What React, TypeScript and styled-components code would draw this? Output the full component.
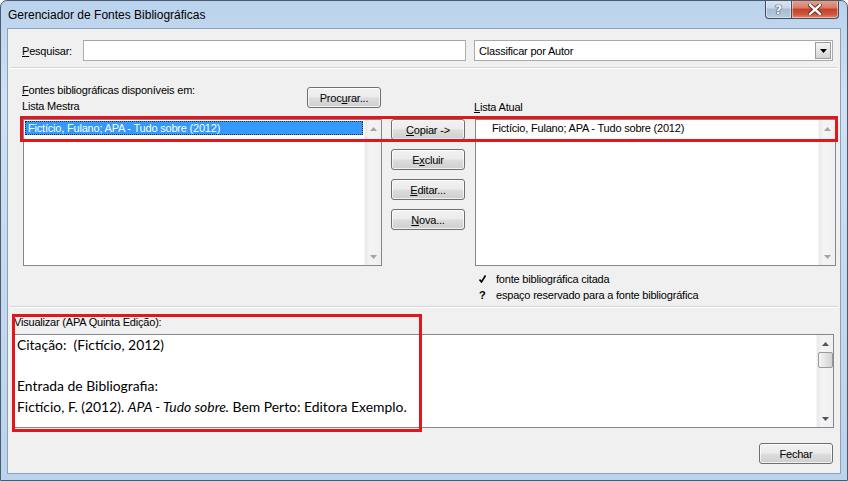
import React from "react";
import styled, { createGlobalStyle } from "styled-components";

const GlobalStyle = createGlobalStyle`
    html, body {
        margin: 0;
        padding: 0;
        background: #ffffff;
    }
    body {
        font-family: "Liberation Sans", Arial, sans-serif;
        font-size: 11px;
        letter-spacing: -0.2px;
        color: #000;
    }
    * {
        box-sizing: border-box;
    }
`;

// Window frame
const Window = styled.div`
    position: relative;
    width: 848px;
    height: 481px;
    display: flex;
    flex-direction: column;
    padding: 0 6px 6px;
    border: 1px solid #4b5c70;
    border-radius: 7px 7px 0 0;
    background: linear-gradient(180deg, #bad2ec 0%, #d0e1f3 20%, #c4d9ef 60%, #bcd3ec 100%);
    overflow: hidden;
`;

const TitleBar = styled.div`
    height: 27px;
    display: flex;
    justify-content: space-between;
    align-items: flex-start;
`;

const TitleText = styled.div`
    margin: 6px 0 0 1px;
    font-size: 12px;
    line-height: 16px;
    letter-spacing: 0;
    color: #000;
`;

const TitleButtons = styled.div`
    display: flex;
    margin: -1px 2px 0 0;
`;

const CaptionButton = styled.div<{ $close?: boolean }>`
    width: ${(p) => (p.$close ? "47px" : "27px")};
    height: 19px;
    display: flex;
    align-items: center;
    justify-content: center;
    border: 1px solid #3f4f62;
    border-top: none;
    border-left: ${(p) => (p.$close ? "none" : "1px solid #3f4f62")};
    border-radius: ${(p) => (p.$close ? "0 0 4px 0" : "0 0 0 4px")};
    background: ${(p) =>
        p.$close
            ? "linear-gradient(180deg, #e8a493 0%, #d47a67 45%, #c2402c 50%, #d2553d 80%, #e38a6e 100%)"
            : "linear-gradient(180deg, #dbe6f2 0%, #c7d6e6 45%, #aabbd0 50%, #b8cade 100%)"};
    box-shadow: inset 0 0 0 1px rgba(255, 255, 255, 0.45);
`;

const HelpGlyph = styled.span`
    font-family: "DejaVu Sans", sans-serif;
    font-size: 13px;
    font-weight: bold;
    color: #f4f7fb;
    letter-spacing: 0;
    text-shadow: 0 0 1px #33475e, 0 0 1px #33475e, 0 0 1px #33475e;
    line-height: 1;
`;

const Client = styled.div`
    position: relative;
    flex: 1;
    display: flex;
    flex-direction: column;
    border: 1px solid #8ba1ba;
    background: #f0f0f0;
`;

// Search row
const SearchRow = styled.div`
    display: flex;
    align-items: center;
    height: 21px;
    margin: 11px 0 0 14px;
`;

const FieldLabel = styled.span`
    width: 61px;
`;

const Accel = styled.span`
    text-decoration: underline;
    text-underline-offset: 1px;
`;

const TextBox = styled.div`
    width: 383px;
    height: 21px;
    background: #fff;
    border: 1px solid #abadb3;
    border-top-color: #a0a4ab;
`;

const SortSelect = styled.div`
    margin-left: 8px;
    width: 359px;
    height: 21px;
    display: flex;
    align-items: center;
    justify-content: space-between;
    padding-left: 4px;
    background: #fff;
    border: 1px solid #a9a9a9;
`;

const DropButton = styled.div`
    width: 16px;
    height: 17px;
    margin-right: 1px;
    display: flex;
    align-items: center;
    justify-content: center;
    border: 1px solid #9c9c9c;
    background: linear-gradient(180deg, #f4f4f4 0%, #e6e6e6 50%, #d4d4d4 100%);
`;

const Separator = styled.div<{ $top: number }>`
    margin: ${(p) => p.$top}px 2px 0;
    height: 2px;
    border-top: 1px solid #d5d5d5;
    border-bottom: 1px solid #ffffff;
`;

// Source lists
const ListsGrid = styled.div`
    display: grid;
    grid-template-columns: 359px 75px 361px;
    grid-template-rows: 37px 147px auto;
    column-gap: 9px;
    margin: 13px 0 0 15px;
`;

const LeftHeader = styled.div`
    display: flex;
    justify-content: space-between;
    align-items: flex-start;
    margin-left: -1px;
`;

const LabelStack = styled.div`
    display: flex;
    flex-direction: column;
    line-height: 16px;
`;

const RightHeader = styled.div`
    display: flex;
    align-items: flex-end;
    line-height: 16px;
    padding-bottom: 4px;
    margin-left: -1px;
`;

const Button = styled.div<{ $top?: number }>`
    width: 74px;
    height: 21px;
    margin-top: ${(p) => p.$top ?? 0}px;
    display: flex;
    align-items: center;
    justify-content: center;
    border: 1px solid #707070;
    border-radius: 3px;
    background: linear-gradient(180deg, #f2f2f2 0%, #ebebeb 48%, #dddddd 52%, #cfcfcf 100%);
    box-shadow: inset 0 0 0 1px rgba(255, 255, 255, 0.7);
    color: #000;
`;

const ProcurarButton = styled(Button)`
    margin-right: 1px;
`;

const ButtonColumn = styled.div`
    display: flex;
    flex-direction: column;
    gap: 9px;
`;

const ListBox = styled.div`
    height: 147px;
    display: flex;
    background: #fff;
    border: 1px solid #828790;
`;

const ListItems = styled.div`
    flex: 1;
    padding: 1px 1px 0 1px;
`;

const ListItem = styled.div<{ $selected?: boolean; $indent?: number }>`
    height: 14px;
    line-height: 12px;
    padding-left: ${(p) => p.$indent ?? 2}px;
    border: 1px ${(p) => (p.$selected ? "dotted #2a2a2a" : "solid transparent")};
    background: ${(p) => (p.$selected ? "#3399ff" : "transparent")};
    color: ${(p) => (p.$selected ? "#fff" : "#000")};
    white-space: nowrap;
`;

const ScrollTrack = styled.div<{ $width?: number }>`
    width: ${(p) => p.$width ?? 17}px;
    display: flex;
    flex-direction: column;
    justify-content: space-between;
    align-items: center;
    background: linear-gradient(90deg, #e9e9e9 0%, #f4f4f4 30%, #f0f0f0 100%);
    border-left: 1px solid #f6f6f6;
`;

const ArrowCell = styled.div`
    height: 17px;
    display: flex;
    align-items: center;
    justify-content: center;
`;

const Thumb = styled.div`
    width: 15px;
    height: 16px;
    border: 1px solid #9a9a9a;
    border-radius: 2px;
    background: linear-gradient(90deg, #f3f3f3 0%, #e4e4e4 50%, #d3d3d3 100%);
`;

const Spacer = styled.div`
    flex: 1;
`;

const Legend = styled.div`
    margin: 5px 0 0 0;
    display: flex;
    flex-direction: column;
    line-height: 16px;
`;

const LegendRow = styled.div`
    display: flex;
    align-items: center;
`;

const LegendIcon = styled.span`
    width: 21px;
    padding-left: 4px;
    display: flex;
    justify-content: flex-start;
    font-weight: bold;
    letter-spacing: 0;
`;

// Preview
const PreviewLabel = styled.div`
    margin: 6px 0 0 6px;
    line-height: 16px;
`;

const PreviewBox = styled.div`
    margin: 4px 0 0 5px;
    width: 821px;
    height: 94px;
    display: flex;
    background: #fff;
    border: 1px solid #828790;
`;

const PreviewText = styled.div`
    flex: 1;
    padding: 0 3px;
    font-family: Lato, "Noto Sans", sans-serif;
    font-size: 13.9px;
    line-height: 20.6px;
    letter-spacing: 0;
    white-space: pre;
    overflow: hidden;
`;

const Footer = styled.div`
    display: flex;
    justify-content: flex-end;
    margin: 15px 7px 0 0;
`;

const Annotation = styled.div<{ $left: number; $top: number; $w: number; $h: number }>`
    position: absolute;
    left: ${(p) => p.$left}px;
    top: ${(p) => p.$top}px;
    width: ${(p) => p.$w}px;
    height: ${(p) => p.$h}px;
    border: 3px solid #e2161b;
    pointer-events: none;
`;

const UpArrow = ({ color = "#a5a5a5" }: { color?: string }) => (
    <svg width="7" height="4" viewBox="0 0 7 4">
        <path d="M0 4 L3.5 0 L7 4 Z" fill={color} />
    </svg>
);

const DownArrow = ({ color = "#a5a5a5" }: { color?: string }) => (
    <svg width="7" height="4" viewBox="0 0 7 4">
        <path d="M0 0 L3.5 4 L7 0 Z" fill={color} />
    </svg>
);

const CloseGlyph = () => (
    <svg width="14" height="11" viewBox="0 0 14 11">
        <path d="M2 1 L12 10 M12 1 L2 10" stroke="#5a1a12" strokeWidth="4" strokeLinecap="square" />
        <path d="M2 1 L12 10 M12 1 L2 10" stroke="#ffffff" strokeWidth="2.4" strokeLinecap="square" />
    </svg>
);

const CheckGlyph = () => (
    <svg width="7" height="8" viewBox="0 0 7 8">
        <path d="M0.5 4.5 L2.5 7 L6.5 0.5" stroke="#000" strokeWidth="1.6" fill="none" />
    </svg>
);

const ScrollBar = () => (
    <ScrollTrack>
        <ArrowCell>
            <UpArrow />
        </ArrowCell>
        <ArrowCell>
            <DownArrow />
        </ArrowCell>
    </ScrollTrack>
);

const App = () => {
    return (
        <>
            <GlobalStyle />
            <Window>
                <TitleBar>
                    <TitleText>Gerenciador de Fontes Bibliográficas</TitleText>
                    <TitleButtons>
                        <CaptionButton>
                            <HelpGlyph>?</HelpGlyph>
                        </CaptionButton>
                        <CaptionButton $close>
                            <CloseGlyph />
                        </CaptionButton>
                    </TitleButtons>
                </TitleBar>
                <Client>
                    <SearchRow>
                        <FieldLabel>
                            <Accel>P</Accel>esquisar:
                        </FieldLabel>
                        <TextBox />
                        <SortSelect>
                            <span>Classificar por Autor</span>
                            <DropButton>
                                <DownArrow color="#000" />
                            </DropButton>
                        </SortSelect>
                    </SearchRow>
                    <Separator $top={6} />

                    <ListsGrid>
                        <LeftHeader>
                            <LabelStack>
                                <span>
                                    <Accel>F</Accel>ontes bibliográficas disponíveis em:
                                </span>
                                <span>Lista Mestra</span>
                            </LabelStack>
                            <ProcurarButton $top={5}>
                                Proc<Accel>u</Accel>rar...
                            </ProcurarButton>
                        </LeftHeader>
                        <div />
                        <RightHeader>
                            <span>
                                <Accel>L</Accel>ista Atual
                            </span>
                        </RightHeader>

                        <ListBox>
                            <ListItems>
                                <ListItem $selected>Fictício, Fulano; APA - Tudo sobre (2012)</ListItem>
                            </ListItems>
                            <ScrollBar />
                        </ListBox>
                        <ButtonColumn>
                            <Button>
                                <Accel>C</Accel>opiar -&gt;
                            </Button>
                            <Button>
                                E<Accel>x</Accel>cluir
                            </Button>
                            <Button>
                                <Accel>E</Accel>ditar...
                            </Button>
                            <Button>
                                <Accel>N</Accel>ova...
                            </Button>
                        </ButtonColumn>
                        <ListBox>
                            <ListItems>
                                <ListItem $indent={14}>Fictício, Fulano; APA - Tudo sobre (2012)</ListItem>
                            </ListItems>
                            <ScrollBar />
                        </ListBox>

                        <div />
                        <div />
                        <Legend>
                            <LegendRow>
                                <LegendIcon>
                                    <CheckGlyph />
                                </LegendIcon>
                                <span>fonte bibliográfica citada</span>
                            </LegendRow>
                            <LegendRow>
                                <LegendIcon>?</LegendIcon>
                                <span>espaço reservado para a fonte bibliográfica</span>
                            </LegendRow>
                        </Legend>
                    </ListsGrid>
                    <Separator $top={3} />

                    <PreviewLabel>Visualizar (APA Quinta Edição):</PreviewLabel>
                    <PreviewBox>
                        <PreviewText>
                            {"Citação:  (Fictício, 2012)\n\nEntrada de Bibliografia:\n"}
                            Fictício, F. (2012). <i>APA - Tudo sobre.</i> Bem Perto: Editora Exemplo.
                        </PreviewText>
                        <ScrollTrack>
                            <ArrowCell>
                                <UpArrow color="#4a5565" />
                            </ArrowCell>
                            <Thumb />
                            <Spacer />
                            <ArrowCell>
                                <DownArrow color="#4a5565" />
                            </ArrowCell>
                        </ScrollTrack>
                    </PreviewBox>

                    <Footer>
                        <Button>Fechar</Button>
                    </Footer>

                    <Annotation $left={12} $top={87} $w={818} $h={26} />
                    <Annotation $left={4} $top={285} $w={410} $h={118} />
                </Client>
            </Window>
        </>
    );
};

export default App;
